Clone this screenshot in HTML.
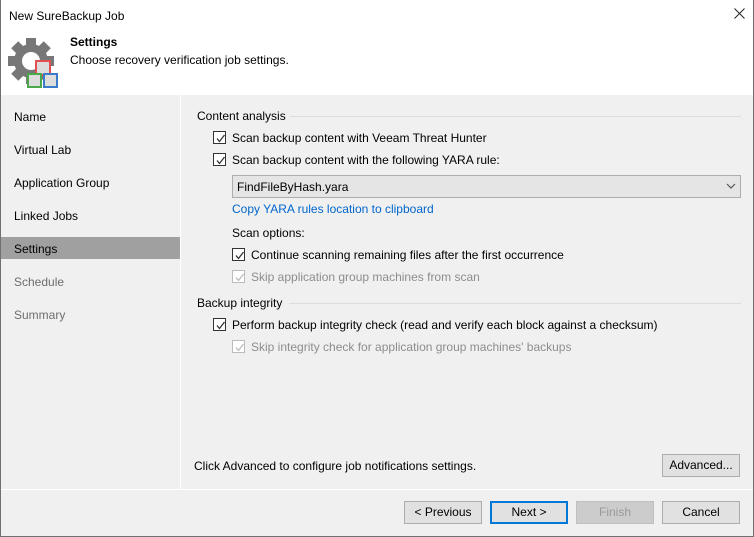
<!DOCTYPE html>
<html><head><style>
*{margin:0;padding:0;box-sizing:border-box}
body{width:754px;height:537px;overflow:hidden;background:#f0f0f0;font-family:"Liberation Sans",sans-serif;font-size:12px;color:#000;position:relative}
.abs{position:absolute;white-space:nowrap}
.win{position:absolute;left:0;top:0;width:754px;height:537px;border:1px solid #707070;border-top:none}
.cb{position:absolute;width:13px;height:13px;border:1px solid #333;background:#fff}
.cb.dis{border-color:#bcbcbc}
.cb svg{position:absolute;left:1px;top:1px}
.btn{position:absolute;height:23px;border:1px solid #adadad;background:#e1e1e1;text-align:center;line-height:21px}
</style></head><body>
<div class="win"></div>
<div class="abs" style="left:1px;top:0;width:752px;height:95px;background:#fff"></div>
<div class="abs" style="left:9px;top:9px">New SureBackup Job</div>
<svg class="abs" style="left:734px;top:8px" width="11" height="11"><path d="M0.5 0.5l10 10M10.5 0.5l-10 10" stroke="#222" stroke-width="1"/></svg>
<svg class="abs" style="left:6px;top:36px" width="54" height="54" viewBox="0 0 54 54">
<g fill="#777">
<circle cx="25" cy="25" r="17"/>
<rect x="20" y="2" width="10" height="10"/><rect x="20" y="38" width="10" height="10"/>
<rect x="2" y="20" width="10" height="10"/><rect x="38" y="20" width="10" height="10"/>
<rect x="20" y="2" width="10" height="10" transform="rotate(45 25 25)"/><rect x="20" y="38" width="10" height="10" transform="rotate(45 25 25)"/>
<rect x="2" y="20" width="10" height="10" transform="rotate(45 25 25)"/><rect x="38" y="20" width="10" height="10" transform="rotate(45 25 25)"/>
</g>
<circle cx="25" cy="25" r="9" fill="#fff"/>
<rect x="30" y="25" width="14" height="14" fill="#ddd" stroke="#e05050" stroke-width="2"/>
<rect x="22" y="38" width="13" height="13" fill="#ddd" stroke="#4aa84a" stroke-width="2"/>
<rect x="38" y="38" width="13" height="13" fill="#ddd" stroke="#3a7cc8" stroke-width="2"/>
</svg>
<div class="abs" style="left:70px;top:35px;font-weight:bold">Settings</div>
<div class="abs" style="left:70px;top:53px">Choose recovery verification job settings.</div>

<div class="abs" style="left:180px;top:95px;width:1px;height:394px;background:#fff"></div>
<div class="abs" style="left:1px;top:237px;width:179px;height:22px;background:#a0a0a0"></div>
<div class="abs" style="left:14px;top:110px">Name</div>
<div class="abs" style="left:14px;top:143px">Virtual Lab</div>
<div class="abs" style="left:14px;top:176px">Application Group</div>
<div class="abs" style="left:14px;top:209px">Linked Jobs</div>
<div class="abs" style="left:14px;top:242px">Settings</div>
<div class="abs" style="left:14px;top:275px;color:#6d6d6d">Schedule</div>
<div class="abs" style="left:14px;top:308px;color:#6d6d6d">Summary</div>

<div class="abs" style="left:197px;top:109px">Content analysis</div>
<div class="abs" style="left:290px;top:116px;width:451px;height:1px;background:#dcdcdc"></div>
<div class="cb" style="left:213px;top:131px"><svg width="11" height="11"><path d="M2 5.5l2.5 3L9.5 2" fill="none" stroke="#333" stroke-width="1.3"/></svg></div>
<div class="abs" style="left:232px;top:131px">Scan backup content with Veeam Threat Hunter</div>
<div class="cb" style="left:213px;top:153px"><svg width="11" height="11"><path d="M2 5.5l2.5 3L9.5 2" fill="none" stroke="#333" stroke-width="1.3"/></svg></div>
<div class="abs" style="left:232px;top:153px">Scan backup content with the following YARA rule:</div>
<div class="abs" style="left:232px;top:175px;width:509px;height:23px;background:#e5e5e5;border:1px solid #adadad"></div>
<div class="abs" style="left:237px;top:180px">FindFileByHash.yara</div>
<svg class="abs" style="left:726px;top:183px" width="10" height="6"><path d="M1 1l4 4 4-4" fill="none" stroke="#555" stroke-width="1.2"/></svg>
<div class="abs" style="left:232px;top:202px;color:#0066cc">Copy YARA rules location to clipboard</div>
<div class="abs" style="left:232px;top:226px">Scan options:</div>
<div class="cb" style="left:232px;top:248px"><svg width="11" height="11"><path d="M2 5.5l2.5 3L9.5 2" fill="none" stroke="#333" stroke-width="1.3"/></svg></div>
<div class="abs" style="left:251px;top:248px">Continue scanning remaining files after the first occurrence</div>
<div class="cb dis" style="left:232px;top:270px"><svg width="11" height="11"><path d="M2 5.5l2.5 3L9.5 2" fill="none" stroke="#bcbcbc" stroke-width="1.3"/></svg></div>
<div class="abs" style="left:251px;top:270px;color:#8d8d8d">Skip application group machines from scan</div>

<div class="abs" style="left:197px;top:296px">Backup integrity</div>
<div class="abs" style="left:289px;top:303px;width:452px;height:1px;background:#dcdcdc"></div>
<div class="cb" style="left:213px;top:318px"><svg width="11" height="11"><path d="M2 5.5l2.5 3L9.5 2" fill="none" stroke="#333" stroke-width="1.3"/></svg></div>
<div class="abs" style="left:232px;top:318px">Perform backup integrity check (read and verify each block against a checksum)</div>
<div class="cb dis" style="left:232px;top:340px"><svg width="11" height="11"><path d="M2 5.5l2.5 3L9.5 2" fill="none" stroke="#bcbcbc" stroke-width="1.3"/></svg></div>
<div class="abs" style="left:251px;top:340px;color:#8d8d8d">Skip integrity check for application group machines' backups</div>

<div class="abs" style="left:194px;top:459px">Click Advanced to configure job notifications settings.</div>
<div class="btn" style="left:662px;top:454px;width:78px">Advanced...</div>
<div class="abs" style="left:1px;top:489px;width:752px;height:1px;background:#fff"></div>
<div class="btn" style="left:404px;top:501px;width:78px">&lt; Previous</div>
<div class="btn" style="left:490px;top:501px;width:78px;border:2px solid #0078d7;line-height:19px">Next &gt;</div>
<div class="btn" style="left:576px;top:501px;width:78px;background:#cccccc;border-color:#bfbfbf;color:#9a9a9a">Finish</div>
<div class="btn" style="left:662px;top:501px;width:78px">Cancel</div>
</body></html>
